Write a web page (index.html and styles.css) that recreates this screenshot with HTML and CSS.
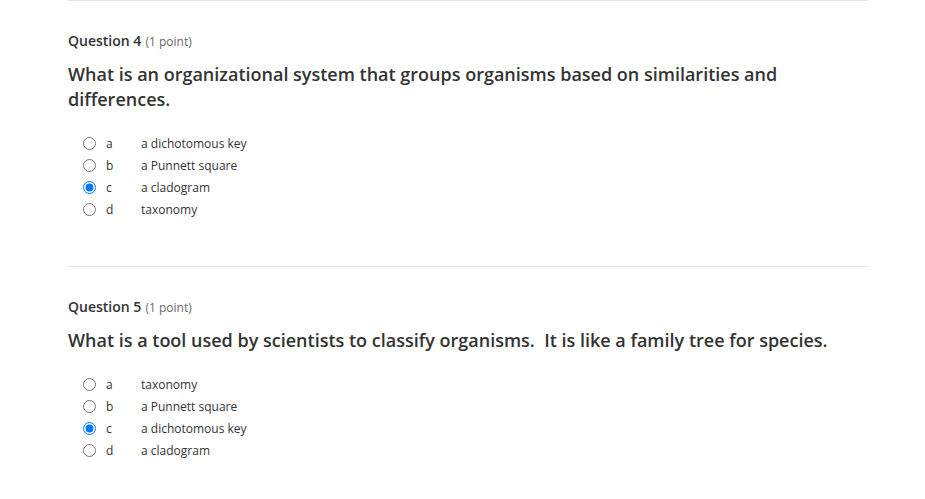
FILE: index.html
```html
<!DOCTYPE html>
<html>
<head>
<meta charset="utf-8">
<link rel="stylesheet" href="styles.css">
</head>
<body>
<div class="quiz">
  <section class="question">
    <div class="q-head"><span class="q-num">Question 4</span> <span class="q-pts">(1 point)</span></div>
    <p class="q-text">What is an organizational system that groups organisms based on similarities and differences.</p>
    <ul class="options">
      <li class="option"><input type="radio" name="q4"><span class="letter">a</span><span class="answer">a dichotomous key</span></li>
      <li class="option"><input type="radio" name="q4"><span class="letter">b</span><span class="answer">a Punnett square</span></li>
      <li class="option"><input type="radio" name="q4" checked><span class="letter">c</span><span class="answer">a cladogram</span></li>
      <li class="option"><input type="radio" name="q4"><span class="letter">d</span><span class="answer">taxonomy</span></li>
    </ul>
  </section>
  <section class="question">
    <div class="q-head"><span class="q-num">Question 5</span> <span class="q-pts">(1 point)</span></div>
    <p class="q-text">What is a tool used by scientists to classify organisms.&nbsp; It is like a family tree for species.</p>
    <ul class="options">
      <li class="option"><input type="radio" name="q5"><span class="letter">a</span><span class="answer">taxonomy</span></li>
      <li class="option"><input type="radio" name="q5"><span class="letter">b</span><span class="answer">a Punnett square</span></li>
      <li class="option"><input type="radio" name="q5" checked><span class="letter">c</span><span class="answer">a dichotomous key</span></li>
      <li class="option"><input type="radio" name="q5"><span class="letter">d</span><span class="answer">a cladogram</span></li>
    </ul>
  </section>
</div>
</body>
</html>
```

FILE: styles.css
```css
html, body {
  margin: 0;
  padding: 0;
  background: #ffffff;
}
body {
  font-family: "Open Sans", "Liberation Sans", sans-serif;
  color: #333333;
}
.quiz {
  margin-left: 67px;
  width: 801px;
}
.question {
  border-top: 1px solid #e6e6e6;
  padding: 30px 0 46px 1px;
}
.q-head {
  line-height: 18px;
  height: 18px;
}
.q-num {
  font-size: 14px;
  font-weight: 600;
  color: #333333;
}
.q-pts {
  font-size: 12px;
  color: #6b6b6b;
}
.q-text {
  margin: 13px 0 20px 0;
  font-size: 18px;
  font-weight: 600;
  line-height: 25px;
  color: #333333;
}
.options {
  list-style: none;
  margin: 0;
  padding: 0 0 0 15px;
}
.option {
  display: flex;
  align-items: center;
  height: 22px;
  font-size: 12px;
  color: #333333;
}
.option input {
  margin: 0;
  width: 13px;
  height: 13px;
  flex: none;
}
.letter {
  width: 45px;
  padding-left: 10px;
  box-sizing: border-box;
  flex: none;
}
.answer {
  flex: none;
}
```
